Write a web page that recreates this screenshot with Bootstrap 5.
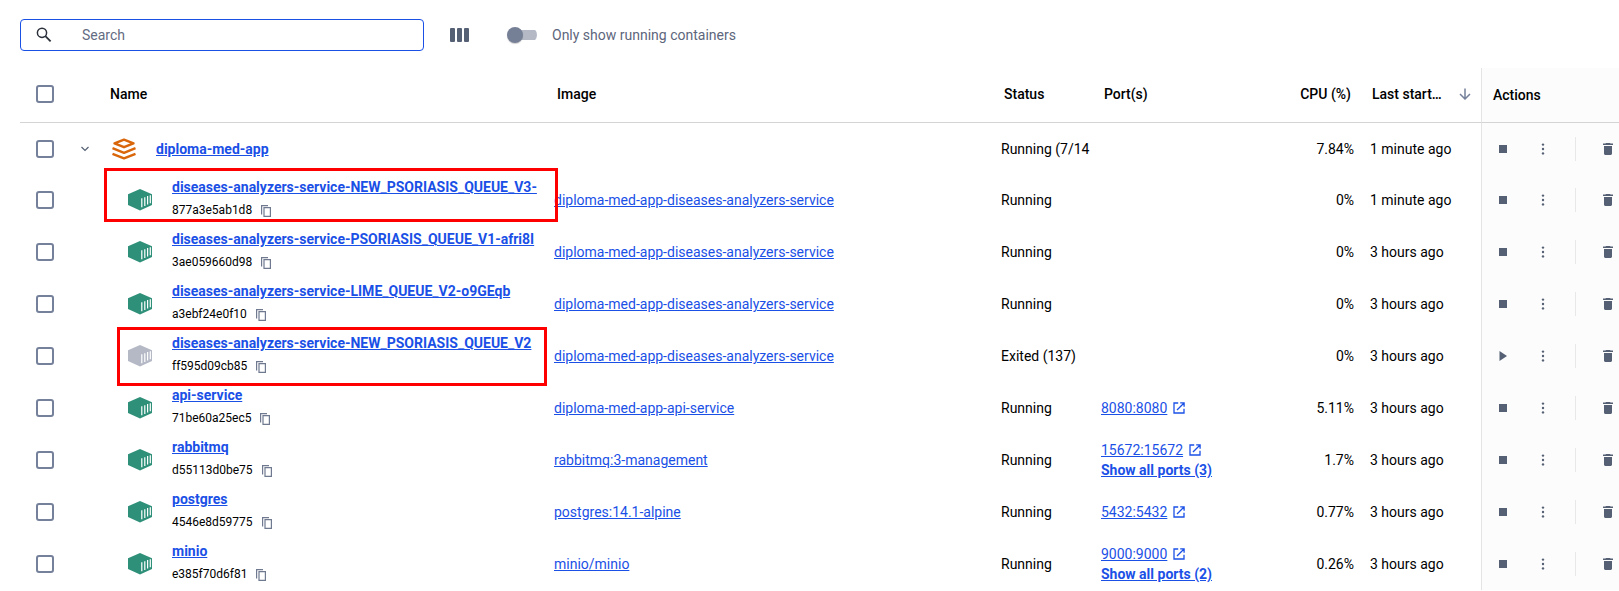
<!DOCTYPE html>
<html lang="en">
<head>
<meta charset="utf-8">
<meta name="viewport" content="width=device-width, initial-scale=1">
<title>Containers</title>
<link href="https://cdn.jsdelivr.net/npm/bootstrap@5.3.0/dist/css/bootstrap.min.css" rel="stylesheet">
<style>
  :root { --dk-blue: #1a50e6; --dk-slate: #556074; --dk-line: #d4d4d4; }
  body { font-family: Roboto, "Liberation Sans", sans-serif; font-size: 14px; line-height: 20px; color: #000; background: #fff; overflow-x: hidden; }
  a { color: var(--dk-blue); }
  svg { display: block; flex: none; }
  main { padding-left: 20px; }
  .toolbar { padding: 19px 0 17px; }
  .search-box { width: 404px; height: 32px; border: 1px solid var(--dk-blue); border-radius: 4px; padding: 0 15px; gap: 30px; }
  .search-box input { border: 0; outline: 0; padding: 0; color: #000; background: transparent; }
  .search-box input::placeholder { color: #636c82; opacity: 1; }
  .cols-btn { width: 27px; height: 24px; margin: 0 34px 0 22px; }
  .run-switch { gap: 15px; color: #5d667c; }
  .run-switch input { appearance: none; width: 30px; height: 16px; margin: 0; background: linear-gradient(#b5b9c6, #b5b9c6) 4px 3px / 26px 10px no-repeat; border-radius: 8px; }
  .run-switch input::before { content: ""; display: block; width: 16px; height: 16px; border-radius: 50%; background: #757f95; box-shadow: 0 1px 1px rgba(0,0,0,.2); }
  .grid-table { table-layout: fixed; width: 100%; margin: 0; border-collapse: separate; border-spacing: 0; }
  .grid-table th { height: 55px; padding: 0 10px 2px; border-bottom: 1px solid var(--dk-line); font-weight: 500; white-space: nowrap; vertical-align: middle; }
  .grid-table th.last { padding-left: 11px; }
  .grid-table th.act { padding: 0 0 0 11px; }
  .grid-table td { height: 52px; padding: 0 7px; vertical-align: middle; white-space: nowrap; overflow: hidden; }
  .grid-table .group-row td { height: 51px; }
  .grid-table .check { padding-left: 16px; padding-right: 0; }
  .grid-table td.last { padding-left: 9px; }
  .grid-table td.named { position: relative; overflow: visible; padding: 0; }
  .grid-table .act { background-color: #fcfcfc; border-left: 1px solid #e4e4e4; }
  .grid-table td.act { padding: 0 0 0 5px; }
  .check input { appearance: none; display: block; width: 18px; height: 18px; margin: 0; border: 2px solid #75809a; border-radius: 3px; background: #fff; }
  .check input:checked { background: var(--dk-blue); }
  .entry { height: 52px; padding-left: 28px; gap: 20px; overflow: hidden; }
  .group-entry { padding-left: 12px; gap: 20px; }
  .label-stack { height: 52px; padding-top: 1px; }
  .title-link { font-weight: 700; }
  .label-stack .title-link { line-height: 24px; display: block; }
  .cid { font-size: 12px; line-height: 23px; gap: 9px; }
  .plain-btn { border: 0; background: none; padding: 0; display: flex; align-items: center; justify-content: center; color: var(--dk-slate); }
  .tool-btn { width: 32px; height: 24px; }
  .trash-btn { width: 22px; height: 24px; }
  .rule { width: 1px; height: 24px; background: #e8e8e8; margin: 0 21px 0 16px; }
  .tool-btn + .tool-btn { margin-left: 8px; }
  .box { color: #2f9079; }
  .box.off { color: #b5b9c6; }
  .mark-frame { position: absolute; border: 3px solid #f00; pointer-events: none; z-index: 2; }
  .frame-a { top: -6px; bottom: 4px; left: 4px; right: -11px; }
  .frame-b { top: -3px; bottom: -4px; left: 17px; right: 0; }
  .port { gap: 6px; }
</style>
</head>
<body>
<svg width="0" height="0" class="position-absolute" aria-hidden="true">
  <symbol id="box" viewBox="0 0 24 22">
    <path fill="currentColor" d="M12 0 24 5.2V16L12 21.5 0 16V5.2z"/>
    <path stroke="#fff" stroke-width="1.2" d="M13.8 9.2v9M16.8 8.2v8.8M19.6 7.1v8.5M22.3 6.2v8" fill="none"/>
  </symbol>
  <symbol id="stack" viewBox="0 0 24 22">
    <path fill="none" stroke="#d9660b" stroke-width="2.4" stroke-linejoin="round" stroke-linecap="butt" d="M12 1.600 21.500 5.400 12 9.200 2.500 5.400zM.5 10.200 12 14.800l11.500-4.600M.5 15.800 12 20.400l11.500-4.600"/>
  </symbol>
  <symbol id="copy" viewBox="0 0 10 12">
    <path fill="none" stroke="#6f7a90" stroke-width="1.2" d="M.6 9.500V.6H7M3 2.600h6.400v8.800H3z"/>
  </symbol>
  <symbol id="open" viewBox="0 0 12 12">
    <path fill="none" stroke="#1a50e6" stroke-width="1.3" d="M5.2 1H1v10h10V6.8M7.2.9h3.900v3.900M10.800 1.200 4 8"/>
  </symbol>
  <symbol id="stop" viewBox="0 0 8 8"><path fill="currentColor" d="M0 0h8v8H0z"/></symbol>
  <symbol id="play" viewBox="0 0 8 10"><path fill="currentColor" d="M.5 0 8 5 .5 10z"/></symbol>
  <symbol id="dots" viewBox="0 0 4 12"><circle cx="2" cy="1.6" r="1.2" fill="currentColor"/><circle cx="2" cy="6" r="1.2" fill="currentColor"/><circle cx="2" cy="10.4" r="1.2" fill="currentColor"/></symbol>
  <symbol id="trash" viewBox="0 0 10 12"><path fill="currentColor" d="M3 0h4l.6.6H10V2H0V.6h2.4zM1 3h8v7.6c0 .8-.5 1.4-1.3 1.4H2.3C1.5 12 1 11.4 1 10.6z"/></symbol>
</svg>

<main>
  <div class="toolbar d-flex align-items-center">
    <label class="search-box d-flex align-items-center">
      <svg width="16" height="16" viewBox="0 0 16 16" fill="none" stroke="#2b303b"><circle cx="6" cy="5.8" r="4.6" stroke-width="1.5"/><path stroke-width="1.8" d="m9.4 9.2 5.2 5.2"/></svg>
      <input type="text" class="flex-grow-1" placeholder="Search" aria-label="Search">
    </label>
    <button class="plain-btn cols-btn" type="button" aria-label="Columns">
      <svg width="19" height="14" viewBox="0 0 19 14" fill="currentColor"><rect width="5" height="14" rx="1"/><rect x="7" width="5" height="14" rx="1"/><rect x="14" width="5" height="14" rx="1"/></svg>
    </button>
    <label class="run-switch d-flex align-items-center"><input type="checkbox" role="switch">Only show running containers</label>
  </div>

  <table class="grid-table">
    <colgroup>
      <col style="width:50px"><col style="width:30px"><col><col><col style="width:100px"><col style="width:167px"><col style="width:100px"><col style="width:120px"><col style="width:138px">
    </colgroup>
    <thead>
      <tr>
        <th class="check"><input type="checkbox" aria-label="Select all"></th><th></th>
        <th>Name</th><th>Image</th><th>Status</th><th>Port(s)</th><th class="text-end">CPU (%)</th>
        <th class="last"><div class="d-flex align-items-center justify-content-between"><span>Last start…</span>
          <svg width="12" height="12" viewBox="0 0 12 12" fill="none" stroke="#75809a" stroke-width="1.5"><path d="M6 .5v10M1 6l5 5 5-5"/></svg></div></th>
        <th class="act">Actions</th>
      </tr>
    </thead>
    <tbody>
      <tr class="group-row">
        <td class="check"><input type="checkbox" aria-label="Select diploma-med-app"></td>
        <td><button class="plain-btn ms-1" type="button" aria-label="Collapse"><svg width="8" height="6" viewBox="0 0 8 6" fill="none" stroke="currentColor" stroke-width="1.2"><path d="m.5 1 3.5 3.5L7.5 1"/></svg></button></td>
        <td class="named"><div class="group-entry d-flex align-items-center"><svg width="24" height="22"><use href="#stack"/></svg><a class="title-link" href="#">diploma-med-app</a></div></td>
        <td></td><td>Running (7/14</td><td></td><td class="text-end">7.84%</td><td class="last">1 minute ago</td>
        <td class="act"><div class="d-flex align-items-center"><button class="plain-btn tool-btn" type="button" aria-label="Stop"><svg width="8" height="8"><use href="#stop"/></svg></button><button class="plain-btn tool-btn" type="button" aria-label="More"><svg width="4" height="12"><use href="#dots"/></svg></button><span class="rule"></span><button class="plain-btn trash-btn" type="button" aria-label="Delete"><svg width="10" height="12"><use href="#trash"/></svg></button></div></td>
      </tr>
      <tr>
        <td class="check"><input type="checkbox" aria-label="Select container"></td><td></td>
        <td class="named"><div class="entry d-flex align-items-center"><svg class="box" width="24" height="22"><use href="#box"/></svg><div class="label-stack"><a class="title-link" href="#">diseases-analyzers-service-NEW_PSORIASIS_QUEUE_V3-</a><div class="cid d-flex align-items-center">877a3e5ab1d8<button class="plain-btn" type="button" aria-label="Copy"><svg width="10" height="12"><use href="#copy"/></svg></button></div></div></div><span class="mark-frame frame-a"></span></td>
        <td><a href="#">diploma-med-app-diseases-analyzers-service</a></td><td>Running</td><td></td><td class="text-end">0%</td><td class="last">1 minute ago</td>
        <td class="act"><div class="d-flex align-items-center"><button class="plain-btn tool-btn" type="button" aria-label="Stop"><svg width="8" height="8"><use href="#stop"/></svg></button><button class="plain-btn tool-btn" type="button" aria-label="More"><svg width="4" height="12"><use href="#dots"/></svg></button><span class="rule"></span><button class="plain-btn trash-btn" type="button" aria-label="Delete"><svg width="10" height="12"><use href="#trash"/></svg></button></div></td>
      </tr>
      <tr>
        <td class="check"><input type="checkbox" aria-label="Select container"></td><td></td>
        <td class="named"><div class="entry d-flex align-items-center"><svg class="box" width="24" height="22"><use href="#box"/></svg><div class="label-stack"><a class="title-link" href="#">diseases-analyzers-service-PSORIASIS_QUEUE_V1-afri8I</a><div class="cid d-flex align-items-center">3ae059660d98<button class="plain-btn" type="button" aria-label="Copy"><svg width="10" height="12"><use href="#copy"/></svg></button></div></div></div></td>
        <td><a href="#">diploma-med-app-diseases-analyzers-service</a></td><td>Running</td><td></td><td class="text-end">0%</td><td class="last">3 hours ago</td>
        <td class="act"><div class="d-flex align-items-center"><button class="plain-btn tool-btn" type="button" aria-label="Stop"><svg width="8" height="8"><use href="#stop"/></svg></button><button class="plain-btn tool-btn" type="button" aria-label="More"><svg width="4" height="12"><use href="#dots"/></svg></button><span class="rule"></span><button class="plain-btn trash-btn" type="button" aria-label="Delete"><svg width="10" height="12"><use href="#trash"/></svg></button></div></td>
      </tr>
      <tr>
        <td class="check"><input type="checkbox" aria-label="Select container"></td><td></td>
        <td class="named"><div class="entry d-flex align-items-center"><svg class="box" width="24" height="22"><use href="#box"/></svg><div class="label-stack"><a class="title-link" href="#">diseases-analyzers-service-LIME_QUEUE_V2-o9GEqb</a><div class="cid d-flex align-items-center">a3ebf24e0f10<button class="plain-btn" type="button" aria-label="Copy"><svg width="10" height="12"><use href="#copy"/></svg></button></div></div></div></td>
        <td><a href="#">diploma-med-app-diseases-analyzers-service</a></td><td>Running</td><td></td><td class="text-end">0%</td><td class="last">3 hours ago</td>
        <td class="act"><div class="d-flex align-items-center"><button class="plain-btn tool-btn" type="button" aria-label="Stop"><svg width="8" height="8"><use href="#stop"/></svg></button><button class="plain-btn tool-btn" type="button" aria-label="More"><svg width="4" height="12"><use href="#dots"/></svg></button><span class="rule"></span><button class="plain-btn trash-btn" type="button" aria-label="Delete"><svg width="10" height="12"><use href="#trash"/></svg></button></div></td>
      </tr>
      <tr>
        <td class="check"><input type="checkbox" aria-label="Select container"></td><td></td>
        <td class="named"><div class="entry d-flex align-items-center"><svg class="box off" width="24" height="22"><use href="#box"/></svg><div class="label-stack"><a class="title-link" href="#">diseases-analyzers-service-NEW_PSORIASIS_QUEUE_V2</a><div class="cid d-flex align-items-center">ff595d09cb85<button class="plain-btn" type="button" aria-label="Copy"><svg width="10" height="12"><use href="#copy"/></svg></button></div></div></div><span class="mark-frame frame-b"></span></td>
        <td><a href="#">diploma-med-app-diseases-analyzers-service</a></td><td>Exited (137)</td><td></td><td class="text-end">0%</td><td class="last">3 hours ago</td>
        <td class="act"><div class="d-flex align-items-center"><button class="plain-btn tool-btn" type="button" aria-label="Start"><svg width="8" height="10"><use href="#play"/></svg></button><button class="plain-btn tool-btn" type="button" aria-label="More"><svg width="4" height="12"><use href="#dots"/></svg></button><span class="rule"></span><button class="plain-btn trash-btn" type="button" aria-label="Delete"><svg width="10" height="12"><use href="#trash"/></svg></button></div></td>
      </tr>
      <tr>
        <td class="check"><input type="checkbox" aria-label="Select container"></td><td></td>
        <td class="named"><div class="entry d-flex align-items-center"><svg class="box" width="24" height="22"><use href="#box"/></svg><div class="label-stack"><a class="title-link" href="#">api-service</a><div class="cid d-flex align-items-center">71be60a25ec5<button class="plain-btn" type="button" aria-label="Copy"><svg width="10" height="12"><use href="#copy"/></svg></button></div></div></div></td>
        <td><a href="#">diploma-med-app-api-service</a></td><td>Running</td><td><div class="port d-flex align-items-center"><a href="#">8080:8080</a><svg width="12" height="12"><use href="#open"/></svg></div></td><td class="text-end">5.11%</td><td class="last">3 hours ago</td>
        <td class="act"><div class="d-flex align-items-center"><button class="plain-btn tool-btn" type="button" aria-label="Stop"><svg width="8" height="8"><use href="#stop"/></svg></button><button class="plain-btn tool-btn" type="button" aria-label="More"><svg width="4" height="12"><use href="#dots"/></svg></button><span class="rule"></span><button class="plain-btn trash-btn" type="button" aria-label="Delete"><svg width="10" height="12"><use href="#trash"/></svg></button></div></td>
      </tr>
      <tr>
        <td class="check"><input type="checkbox" aria-label="Select container"></td><td></td>
        <td class="named"><div class="entry d-flex align-items-center"><svg class="box" width="24" height="22"><use href="#box"/></svg><div class="label-stack"><a class="title-link" href="#">rabbitmq</a><div class="cid d-flex align-items-center">d55113d0be75<button class="plain-btn" type="button" aria-label="Copy"><svg width="10" height="12"><use href="#copy"/></svg></button></div></div></div></td>
        <td><a href="#">rabbitmq:3-management</a></td><td>Running</td><td><div class="port d-flex align-items-center"><a href="#">15672:15672</a><svg width="12" height="12"><use href="#open"/></svg></div><a class="title-link" href="#">Show all ports (3)</a></td><td class="text-end">1.7%</td><td class="last">3 hours ago</td>
        <td class="act"><div class="d-flex align-items-center"><button class="plain-btn tool-btn" type="button" aria-label="Stop"><svg width="8" height="8"><use href="#stop"/></svg></button><button class="plain-btn tool-btn" type="button" aria-label="More"><svg width="4" height="12"><use href="#dots"/></svg></button><span class="rule"></span><button class="plain-btn trash-btn" type="button" aria-label="Delete"><svg width="10" height="12"><use href="#trash"/></svg></button></div></td>
      </tr>
      <tr>
        <td class="check"><input type="checkbox" aria-label="Select container"></td><td></td>
        <td class="named"><div class="entry d-flex align-items-center"><svg class="box" width="24" height="22"><use href="#box"/></svg><div class="label-stack"><a class="title-link" href="#">postgres</a><div class="cid d-flex align-items-center">4546e8d59775<button class="plain-btn" type="button" aria-label="Copy"><svg width="10" height="12"><use href="#copy"/></svg></button></div></div></div></td>
        <td><a href="#">postgres:14.1-alpine</a></td><td>Running</td><td><div class="port d-flex align-items-center"><a href="#">5432:5432</a><svg width="12" height="12"><use href="#open"/></svg></div></td><td class="text-end">0.77%</td><td class="last">3 hours ago</td>
        <td class="act"><div class="d-flex align-items-center"><button class="plain-btn tool-btn" type="button" aria-label="Stop"><svg width="8" height="8"><use href="#stop"/></svg></button><button class="plain-btn tool-btn" type="button" aria-label="More"><svg width="4" height="12"><use href="#dots"/></svg></button><span class="rule"></span><button class="plain-btn trash-btn" type="button" aria-label="Delete"><svg width="10" height="12"><use href="#trash"/></svg></button></div></td>
      </tr>
      <tr>
        <td class="check"><input type="checkbox" aria-label="Select container"></td><td></td>
        <td class="named"><div class="entry d-flex align-items-center"><svg class="box" width="24" height="22"><use href="#box"/></svg><div class="label-stack"><a class="title-link" href="#">minio</a><div class="cid d-flex align-items-center">e385f70d6f81<button class="plain-btn" type="button" aria-label="Copy"><svg width="10" height="12"><use href="#copy"/></svg></button></div></div></div></td>
        <td><a href="#">minio/minio</a></td><td>Running</td><td><div class="port d-flex align-items-center"><a href="#">9000:9000</a><svg width="12" height="12"><use href="#open"/></svg></div><a class="title-link" href="#">Show all ports (2)</a></td><td class="text-end">0.26%</td><td class="last">3 hours ago</td>
        <td class="act"><div class="d-flex align-items-center"><button class="plain-btn tool-btn" type="button" aria-label="Stop"><svg width="8" height="8"><use href="#stop"/></svg></button><button class="plain-btn tool-btn" type="button" aria-label="More"><svg width="4" height="12"><use href="#dots"/></svg></button><span class="rule"></span><button class="plain-btn trash-btn" type="button" aria-label="Delete"><svg width="10" height="12"><use href="#trash"/></svg></button></div></td>
      </tr>
    </tbody>
  </table>
</main>
<script src="https://cdn.jsdelivr.net/npm/bootstrap@5.3.0/dist/js/bootstrap.bundle.min.js"></script>
</body>
</html>
